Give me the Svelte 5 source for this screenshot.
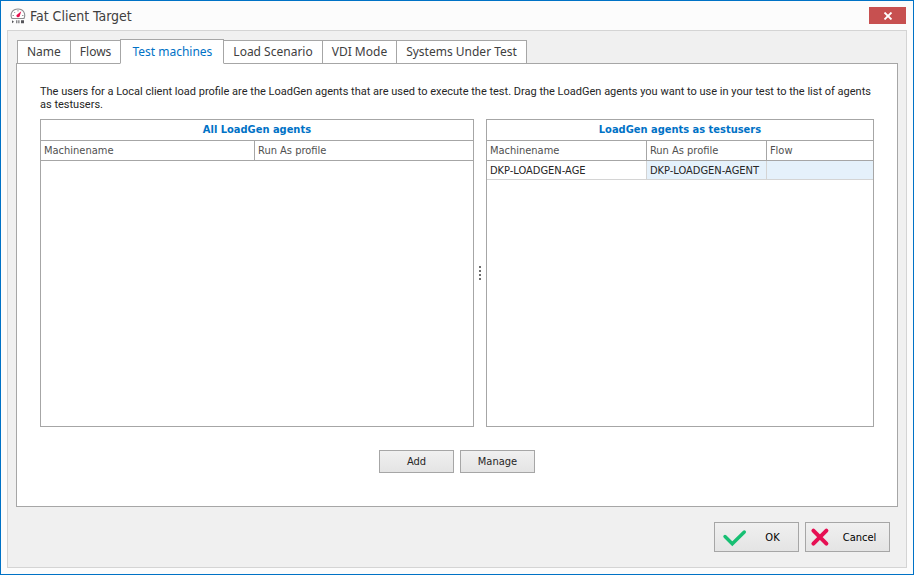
<script lang="ts">
	type Agent = { machine: string; profile: string; flow: string };

	const tabs = ['Name', 'Flows', 'Test machines', 'Load Scenario', 'VDI Mode', 'Systems Under Test'];

	let active = 'Test machines';
	let testusers: Agent[] = [
		{ machine: 'DKP-LOADGEN-AGE', profile: 'DKP-LOADGEN-AGENT', flow: '' }
	];
</script>

<div class="window">
	<header class="titlebar">
		<svg viewBox="0 0 16 16" width="16" height="16" aria-hidden="true">
			<path d="M2 10.5 C-0.5 6 2.5 1 8 1 S16 6 14 10.5 Z" fill="#fff" stroke="#8c8c90" stroke-width="1.1" />
			<path d="M2.5 7.5h1.5M4.2 4l1 1M8 2v1.5M13.5 7.5h-1.5" stroke="#9a9a9e" stroke-width="1" />
			<path d="M11.2 3.2 L9.6 8.6 A1.8 1.8 0 0 1 6.4 7.2 Z" fill="#e8114f" />
			<path d="M2 12.2v3l2-1.5zM6.3 12.2h1v3h-1zM8.4 12.2h1v3h-1zM11 12.2h3v3h-3z" fill="#55555a" />
		</svg>
		<h1>Fat Client Target</h1>
		<button class="close" aria-label="Close">
			<svg viewBox="0 0 10 8" width="10" height="8" aria-hidden="true">
				<path d="M1.5 0.5 L8.5 7.5 M8.5 0.5 L1.5 7.5" stroke="#fff" stroke-width="1.8" />
			</svg>
		</button>
	</header>

	<main class="frame">
		<div class="tabs" role="tablist">
			{#each tabs as tab}
				<button
					role="tab"
					class="tab"
					class:active={tab === active}
					aria-selected={tab === active}
					on:click={() => (active = tab)}>{tab}</button>
			{/each}
		</div>

		<section class="panel">
			<p class="intro">
				The users for a Local client load profile are the LoadGen agents that are used to execute the
				test. Drag the LoadGen agents you want to use in your test to the list of agents as testusers.
			</p>

			<div class="lists">
				<div class="list all">
					<table>
						<caption>All LoadGen agents</caption>
						<thead>
							<tr>
								<th class="half">Machinename</th>
								<th>Run As profile</th>
							</tr>
						</thead>
					</table>
				</div>

				<div class="splitter"><i></i><i></i><i></i><i></i></div>

				<div class="list users">
					<table>
						<caption>LoadGen agents as testusers</caption>
						<thead>
							<tr>
								<th class="machine">Machinename</th>
								<th class="profile">Run As profile</th>
								<th>Flow</th>
							</tr>
						</thead>
						<tbody>
							{#each testusers as user}
								<tr>
									<td>{user.machine}</td>
									<td class="selected">{user.profile}</td>
									<td class="selected">{user.flow}</td>
								</tr>
							{/each}
						</tbody>
					</table>
				</div>
			</div>

			<div class="actions">
				<button class="btn">Add</button>
				<button class="btn">Manage</button>
			</div>
		</section>

		<footer>
			<button class="btn large">
				<svg viewBox="0 0 28 24" width="28" height="24" aria-hidden="true">
					<path d="M6 11.5 L13.3 18.8 L25.3 7" fill="none" stroke="#17bf73" stroke-width="3.4" stroke-linecap="round" />
				</svg>
				<span>OK</span>
			</button>
			<button class="btn large">
				<svg viewBox="0 0 20 24" width="20" height="24" aria-hidden="true">
					<path d="M3.4 5.6 L16.4 18.6 M16.4 5.6 L3.4 18.6" stroke="#e60f53" stroke-width="4" stroke-linecap="round" />
				</svg>
				<span>Cancel</span>
			</button>
		</footer>
	</main>
</div>

<style>
	:global(body) {
		margin: 0;
		font-family: 'DejaVu Sans Condensed', 'Noto Sans', sans-serif;
		font-size: 11px;
		line-height: 13px;
		color: #262626;
	}

	* {
		box-sizing: border-box;
	}

	button {
		font: inherit;
		color: inherit;
		padding: 0;
		border-radius: 0;
	}

	.window {
		min-height: 100vh;
		display: flex;
		flex-direction: column;
		padding: 0 6px 6px;
		border: 1px solid #0072c6;
		background: #fcfcfc;
	}

	.titlebar {
		display: flex;
		align-items: center;
		height: 29px;
		padding: 0 1px 0 3px;
	}

	h1 {
		flex: 1;
		margin: 0 0 0 4px;
		font-size: 14px;
		font-weight: normal;
		line-height: 18px;
		color: #404040;
	}

	.close {
		display: flex;
		align-items: center;
		justify-content: center;
		width: 37px;
		height: 17px;
		border: none;
		background: #c75050;
	}

	.frame {
		flex: 1;
		display: flex;
		flex-direction: column;
		padding: 8px 8px 15px;
		border: 1px solid #d4d4d4;
		background: #f0f0f0;
	}

	.tabs {
		display: flex;
		align-items: flex-end;
		padding-left: 1px;
	}

	.tab {
		height: 24px;
		padding: 0 9px;
		margin: 0 -1px -1px 0;
		border: 1px solid #a6a6a6;
		background: #fff;
		font-family: 'Noto Sans', sans-serif;
		font-size: 12px;
		line-height: 16px;
		color: #404040;
	}

	.tab.active {
		height: 25px;
		padding: 0 11px;
		border-bottom-color: #fff;
		color: #0072c6;
		z-index: 1;
	}

	.panel {
		flex: 1;
		display: flex;
		flex-direction: column;
		padding: 21px 23px 33px;
		border: 1px solid #a6a6a6;
		background: #fff;
	}

	.intro {
		margin: 0 0 8px;
		font-family: Roboto, sans-serif;
	}

	.lists {
		flex: 1;
		display: flex;
	}

	.list {
		min-width: 0;
		min-height: 120px;
		border: 1px solid #a6a6a6;
	}

	.all {
		flex: 434 1 0;
	}

	.users {
		flex: 388 1 0;
	}

	.splitter {
		width: 12px;
		display: flex;
		flex-direction: column;
		align-items: center;
		justify-content: center;
		gap: 2px;
		cursor: col-resize;
	}

	.splitter i {
		width: 2px;
		height: 2px;
		background: #6e6e6e;
	}

	table {
		width: 100%;
		table-layout: fixed;
		border-collapse: separate;
		border-spacing: 0;
	}

	caption {
		height: 21px;
		line-height: 20px;
		border-bottom: 1px solid #a6a6a6;
		font-weight: bold;
		color: #0072c6;
	}

	th,
	td {
		height: 20px;
		padding: 0 3px;
		text-align: left;
		white-space: nowrap;
		border-right: 1px solid #a6a6a6;
		border-bottom: 1px solid #a6a6a6;
	}

	th {
		font-weight: normal;
		color: #505050;
	}

	td {
		height: 19px;
		border-color: #d4d4d4;
	}

	th:last-child,
	td:last-child {
		border-right: none;
	}

	.half {
		width: 214px;
	}

	.machine {
		width: 160px;
	}

	.profile {
		width: 120px;
	}

	.selected {
		background: #e5f1fb;
	}

	.actions {
		display: flex;
		justify-content: center;
		gap: 6px;
		margin-top: 23px;
	}

	.btn {
		width: 75px;
		height: 23px;
		border: 1px solid #a6a6a6;
		background: linear-gradient(#f0f0f0, #e4e4e4);
	}

	footer {
		display: flex;
		justify-content: flex-end;
		gap: 6px;
		padding-right: 8px;
		margin-top: 15px;
	}

	.large {
		display: flex;
		align-items: center;
		width: 85px;
		height: 30px;
		padding-left: 4px;
		color: #000;
	}

	.large span {
		flex: 1;
		text-align: center;
	}
</style>
